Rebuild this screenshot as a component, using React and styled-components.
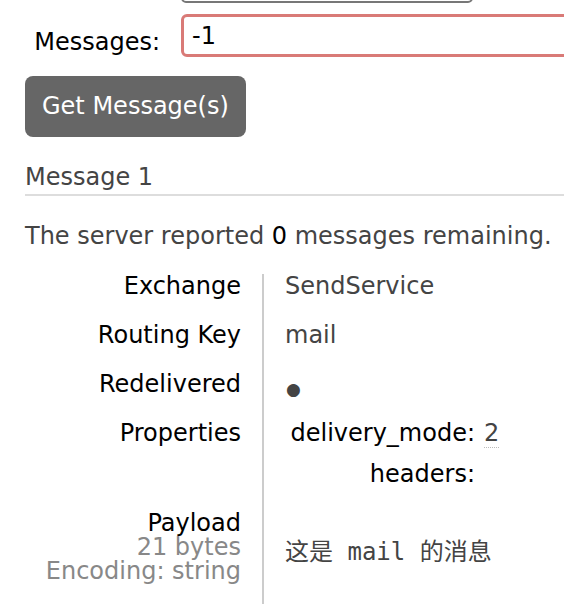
import React from 'react';
import styled, { createGlobalStyle } from 'styled-components';

const GlobalStyle = createGlobalStyle`
  html, body {
    margin: 0;
    padding: 0;
    background: #fff;
    overflow: hidden;
  }
  body {
    font-family: "DejaVu Sans", Verdana, sans-serif;
    font-size: 24px;
    color: #000;
  }
`;

const App = () => (
  <>
    <GlobalStyle />
    <Page>
      <FormGrid>
        <FieldLabel />
        <SelectBox />
        <FieldLabel $drop>Messages:</FieldLabel>
        <NumberInput defaultValue="-1" />
      </FormGrid>
      <Button>Get Message(s)</Button>

      <Heading>Message 1</Heading>
      <Summary>
        The server reported <Count>0</Count> messages remaining.
      </Summary>

      <Facts>
        <Label>Exchange</Label>
        <Value>SendService</Value>

        <Label>Routing Key</Label>
        <Value>mail</Value>

        <Label>Redelivered</Label>
        <Value><Bullet>●</Bullet></Value>

        <Label>Properties</Label>
        <Value>
          <PropGrid>
            <PropKey>delivery_mode:</PropKey>
            <PropVal><Abbr>2</Abbr></PropVal>
            <PropKey>headers:</PropKey>
            <PropVal />
          </PropGrid>
        </Value>

        <Label>
          Payload
          <Sub>21 bytes</Sub>
          <Sub>Encoding: string</Sub>
        </Label>
        <Value $middle>
          <Payload>这是 mail 的消息</Payload>
        </Value>
      </Facts>
    </Page>
  </>
);

const Page = styled.div`
  padding-left: 25px;
  width: 539px;
`;

const FormGrid = styled.div`
  display: grid;
  grid-template-columns: 156px 420px;
  row-gap: 11px;
  align-items: center;
  margin-top: -37px;
`;

const FieldLabel = styled.div`
  text-align: right;
  padding-right: 21px;
  padding-top: ${p => (p.$drop ? '12px' : '0')};
  line-height: 24px;
`;

const SelectBox = styled.div`
  width: 292px;
  height: 40px;
  box-sizing: border-box;
  border: 2px solid #777;
  border-radius: 5px;
`;

const NumberInput = styled.input`
  box-sizing: border-box;
  width: 420px;
  height: 43px;
  border: 3px solid #d97a77;
  border-radius: 6px;
  padding: 0 8px;
  font-family: "DejaVu Sans", Verdana, sans-serif;
  font-size: 24px;
  color: #000;
  outline: none;
`;

const Button = styled.button`
  display: block;
  margin-top: 19px;
  padding: 18px 17px;
  line-height: 25px;
  border: none;
  border-radius: 8px;
  background: #666;
  color: #fff;
  font-family: "DejaVu Sans", Verdana, sans-serif;
  font-size: 24px;
`;

const Heading = styled.h2`
  margin: 28px 0 0;
  padding-bottom: 5px;
  font-size: 24px;
  font-weight: normal;
  line-height: 24px;
  color: #444;
  border-bottom: 2px solid #ddd;
`;

const Summary = styled.p`
  margin: 28px 0 0;
  line-height: 24px;
  color: #444;
  white-space: nowrap;
`;

const Count = styled.span`
  color: #000;
`;

const Facts = styled.div`
  display: grid;
  grid-template-columns: 239px 1fr;
  margin-top: 26px;
  line-height: 24px;
`;

const Label = styled.div`
  display: flex;
  flex-direction: column;
  align-items: flex-end;
  padding: 0 21px 25px 0;
  border-right: 2px solid #ccc;
  color: #000;
`;

const Sub = styled.span`
  color: #888;
`;

const Value = styled.div`
  padding: 0 0 25px 21px;
  color: #444;
  align-self: stretch;
  display: flex;
  align-items: ${p => (p.$middle ? 'center' : 'flex-start')};
`;

const Bullet = styled.span`
  font-size: 17px;
  line-height: 24px;
  position: relative;
  top: 5px;
  left: 1px;
`;

const PropGrid = styled.div`
  display: grid;
  grid-template-columns: 190px auto;
  column-gap: 9px;
  row-gap: 17px;
`;

const PropKey = styled.div`
  text-align: right;
  color: #000;
`;

const PropVal = styled.div`
  color: #444;
`;

const Abbr = styled.span`
  border-bottom: 1px dotted #bbb;
`;

const Payload = styled.pre`
  margin: 10px 0 0;
  font-family: "DejaVu Sans Mono", "Noto Sans CJK SC", monospace;
  font-size: 24px;
  line-height: 24px;
  color: #444;
`;

export default App;
